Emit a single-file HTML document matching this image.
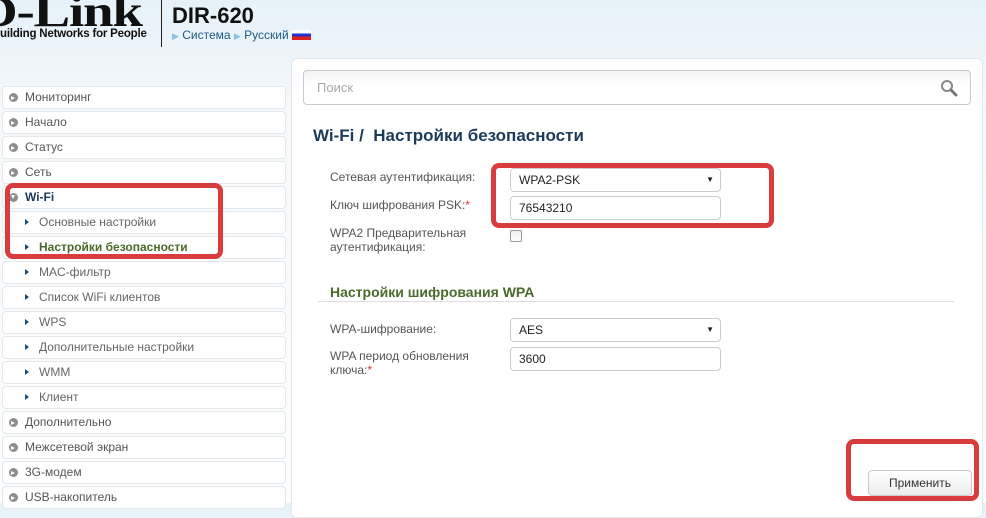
<!DOCTYPE html>
<html><head><meta charset="utf-8"><style>
*{box-sizing:border-box}
body{margin:0;width:986px;height:503px;overflow:hidden;font-family:"Liberation Sans",Arial,sans-serif;background:linear-gradient(#e6f1f9 0,#eef5fa 60px,#f6f9fb 120px,#fbfcfd 503px);position:relative}
.abs{position:absolute}
.logo{left:-22px;top:-14px;font:bold 44px "Liberation Serif",serif;letter-spacing:-1px;color:#111;transform:scaleX(1.25);transform-origin:0 0}
.tag{left:0;top:28px;font:bold 11.5px "Liberation Sans",sans-serif;color:#111;letter-spacing:-0.2px}
.vl{left:161px;top:0;width:1px;height:47px;background:#222}
.model{left:172px;top:3px;font:bold 22px "Liberation Sans";color:#111}
.nav{left:172px;top:28px;font-size:12px;color:#1c5a83}
.nav i{font-style:normal;color:#8cc5e3;font-size:9px}
.flag{display:inline-block;width:19px;height:10px;vertical-align:-1px;background:linear-gradient(#fff 0,#fff 33%,#2233cc 33%,#2233cc 66%,#e02020 66%)}
.side{left:2px;top:86px;width:284px}
.it{height:23px;margin-bottom:2px;border:1px solid #e4e8eb;border-radius:4px;background:#fff;font-size:12px;color:#555;line-height:21px;padding-left:6px}
.it b{display:inline-block;width:9px;height:9px;border-radius:50%;background:#8d8d8d;margin-right:7px;vertical-align:-1px;position:relative}
.it b:after{content:"";position:absolute;left:2px;top:2.5px;border-left:4px solid #fff;border-top:2px solid transparent;border-bottom:2px solid transparent}
.sub{padding-left:22px;color:#666}
.sub b{width:0;height:0;border-radius:0;background:none;border-left:4px solid #1b4e77;border-top:3px solid transparent;border-bottom:3px solid transparent;margin-right:10px;vertical-align:1px}
.sub b:after{display:none}
.panel{left:291px;top:58px;width:692px;height:460px;background:#fff;border:1px solid #e4e8eb;border-radius:6px}
.search{left:303px;top:70px;width:668px;height:35px;border:1px solid #c8ccd0;border-radius:4px;background:linear-gradient(#f3f3f3,#fff 40%);font-size:13px;color:#aaa;line-height:33px;padding-left:13px}
h1{position:absolute;left:313px;top:126px;margin:0;font-size:17px;color:#1b3b5a;font-weight:bold}
.lbl{font-size:12px;color:#555;left:330px;line-height:14px}
.in{left:510px;width:211px;height:24px;border:1px solid #ccc;border-radius:4px;background:#fff;font-size:12px;color:#222;line-height:22px;padding-left:8px}
.sel:after{content:"▼";position:absolute;right:6px;top:0;font-size:8px}
.red{border:5px solid #d83c3c;border-radius:8px}
.h2{left:330px;top:284px;font-size:14px;font-weight:bold;color:#4a6b2a}
.hr{left:318px;top:301px;width:636px;height:1px;background:#ddd}
.btn{left:868px;top:470px;width:104px;height:26px;border:1px solid #c9c9c9;border-radius:4px;background:linear-gradient(#fff,#ececec);font-size:12px;color:#333;text-align:center;line-height:24px}
</style></head><body>
<div class="abs logo">D-Link</div>
<div class="abs tag">uilding Networks for People</div>
<div class="abs vl"></div>
<div class="abs model">DIR-620</div>
<div class="abs nav"><i>▶</i> Система <i>▶</i> Русский <span class="flag"></span></div>

<div class="abs side">
<div class="it"><b></b>Мониторинг</div>
<div class="it"><b></b>Начало</div>
<div class="it"><b></b>Статус</div>
<div class="it"><b></b>Сеть</div>
<div class="it" style="color:#1b3b5a;font-weight:bold"><b style="transform:rotate(90deg)"></b>Wi-Fi</div>
<div class="it sub"><b></b>Основные настройки</div>
<div class="it sub" style="color:#4a6b2a;font-weight:bold"><b></b>Настройки безопасности</div>
<div class="it sub"><b></b>MAC-фильтр</div>
<div class="it sub"><b></b>Список WiFi клиентов</div>
<div class="it sub"><b></b>WPS</div>
<div class="it sub"><b></b>Дополнительные настройки</div>
<div class="it sub"><b></b>WMM</div>
<div class="it sub"><b></b>Клиент</div>
<div class="it"><b></b>Дополнительно</div>
<div class="it"><b></b>Межсетевой экран</div>
<div class="it"><b></b>3G-модем</div>
<div class="it"><b></b>USB-накопитель</div>
</div>
<div class="abs red" style="left:5px;top:183px;width:218px;height:76px"></div>

<div class="abs panel"></div>
<div class="abs search">Поиск
<svg style="position:absolute;right:12px;top:8px" width="18" height="18" viewBox="0 0 18 18"><circle cx="7" cy="7" r="5" fill="none" stroke="#888" stroke-width="2"/><path d="M11 11l5 5" stroke="#777" stroke-width="3" stroke-linecap="round"/></svg></div>
<h1>Wi-Fi /&nbsp; Настройки безопасности</h1>

<div class="abs lbl" style="top:170px">Сетевая аутентификация:</div>
<div class="abs in sel" style="top:168px">WPA2-PSK</div>
<div class="abs lbl" style="top:198px">Ключ шифрования PSK:<span style="color:#d33">*</span></div>
<div class="abs in" style="top:196px">76543210</div>
<div class="abs lbl" style="top:226px">WPA2 Предварительная<br>аутентификация:</div>
<div class="abs" style="left:510px;top:230px;width:12px;height:12px;border:1px solid #999;border-radius:2px;background:linear-gradient(#eee,#fff)"></div>
<div class="abs red" style="left:491px;top:163px;width:283px;height:65px"></div>

<div class="abs h2">Настройки шифрования WPA</div>
<div class="abs hr"></div>
<div class="abs lbl" style="top:322px">WPA-шифрование:</div>
<div class="abs in sel" style="top:318px">AES</div>
<div class="abs lbl" style="top:349px">WPA период обновления<br>ключа:<span style="color:#d33">*</span></div>
<div class="abs in" style="top:347px">3600</div>

<div class="abs btn">Применить</div>
<div class="abs red" style="left:846px;top:439px;width:133px;height:62px"></div>
</body></html>
